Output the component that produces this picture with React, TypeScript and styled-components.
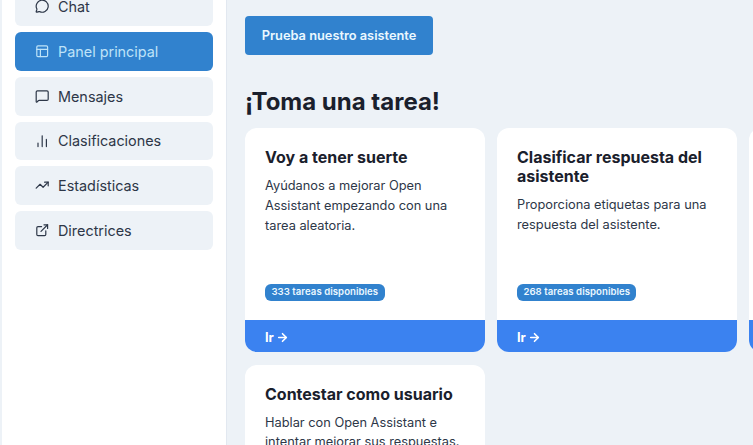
import React from 'react';
import styled, { createGlobalStyle } from 'styled-components';
import { ArrowRight, ChartNoAxesColumn, ExternalLink, MessageCircle, MessageSquare, PanelsTopLeft, TrendingUp } from 'lucide-react';

const GlobalStyle = createGlobalStyle`
  html, body {
    margin: 0;
    height: 100%;
    overflow: hidden;
    background: #edf2f7;
    font-family: Inter, "Liberation Sans", sans-serif;
  }
  * { box-sizing: border-box; }
`;

const Page = styled.div`
  display: flex;
  width: 753px;
  height: 445px;
  overflow: hidden;
  padding-left: 2px;
`;

const Sidebar = styled.nav`
  width: 225px;
  flex-shrink: 0;
  background: #fff;
  border-right: 1px solid #e2e8f0;
  padding: 0 13px;
`;

const NavList = styled.div`
  display: flex;
  flex-direction: column;
  gap: 6px;
  margin-top: -12.7px;
`;

const NavItem = styled.div<{ $active?: boolean }>`
  display: flex;
  align-items: center;
  gap: 8.6px;
  height: 38.75px;
  padding-left: 20px;
  border-radius: 6px;
  font-size: 14.4px;
  background: ${p => (p.$active ? '#3182ce' : '#edf2f7')};
  color: ${p => (p.$active ? '#bee3f8' : '#2d3748')};
  svg {
    width: 14.4px;
    height: 14.4px;
    flex-shrink: 0;
  }
`;

const Main = styled.main`
  flex: 1;
  min-width: 0;
  padding: 16px 0 0 18px;
`;

const AssistantButton = styled.button`
  display: block;
  width: 188px;
  height: 39px;
  padding: 0;
  border: 0;
  border-radius: 4px;
  background: #3182ce;
  color: #ebf8ff;
  font: 600 12.8px Inter, "Liberation Sans", sans-serif;
`;

const Heading = styled.h2`
  margin: 32px 0 12px;
  font-size: 24px;
  line-height: 29px;
  font-weight: 700;
  color: #1a202c;
`;

const CardGrid = styled.div`
  display: grid;
  grid-template-columns: repeat(3, 240px);
  gap: 12.5px 12px;
`;

const Card = styled.article`
  display: flex;
  flex-direction: column;
  height: 224px;
  border-radius: 12px;
  overflow: hidden;
  background: #fff;
`;

const CardBody = styled.div`
  flex: 1;
  display: flex;
  flex-direction: column;
  padding: 20px 20px 19px;
`;

const CardTitle = styled.h3`
  margin: 0 0 8.8px;
  font-size: 16px;
  line-height: 19.2px;
  font-weight: 700;
  color: #1a202c;
`;

const CardText = styled.p`
  margin: 0;
  font-size: 12.8px;
  line-height: 19.9px;
  color: #2d3748;
`;

const Badge = styled.span`
  align-self: flex-start;
  margin-top: auto;
  padding: 0 6.4px;
  height: 17px;
  line-height: 16px;
  border-radius: 6px;
  background: #3182ce;
  color: #ebf8ff;
  font-size: 9.6px;
  font-weight: 600;
  letter-spacing: 0.05px;
`;

const CardFooter = styled.div`
  display: flex;
  align-items: center;
  gap: 2.5px;
  height: 32px;
  padding: 2px 0 0 20px;
  background: #3b82f0;
  color: #fff;
  font-size: 12.8px;
  font-weight: 700;
  svg {
    width: 13px;
    height: 13px;
    stroke-width: 3;
  }
`;

const navItems = [
  { label: 'Chat', icon: <MessageCircle /> },
  { label: 'Panel principal', icon: <PanelsTopLeft />, active: true },
  { label: 'Mensajes', icon: <MessageSquare /> },
  { label: 'Clasificaciones', icon: <ChartNoAxesColumn /> },
  { label: 'Estadísticas', icon: <TrendingUp /> },
  { label: 'Directrices', icon: <ExternalLink /> },
];

const tasks = [
  { title: 'Voy a tener suerte', text: 'Ayúdanos a mejorar Open Assistant empezando con una tarea aleatoria.', count: 333 },
  { title: 'Clasificar respuesta del asistente', text: 'Proporciona etiquetas para una respuesta del asistente.', count: 268 },
  { title: 'Responder como asistente', text: 'Ayuda a Open Assistant a mejorar sus respuestas.', count: 120 },
  { title: 'Contestar como usuario', text: 'Hablar con Open Assistant e intentar mejorar sus respuestas.', count: 95 },
];

const App = () => (
  <>
    <GlobalStyle />
    <Page>
      <Sidebar>
        <NavList>
          {navItems.map(item => (
            <NavItem key={item.label} $active={item.active}>
              {item.icon}
              {item.label}
            </NavItem>
          ))}
        </NavList>
      </Sidebar>
      <Main>
        <AssistantButton>Prueba nuestro asistente</AssistantButton>
        <Heading>¡Toma una tarea!</Heading>
        <CardGrid>
          {tasks.map(task => (
            <Card key={task.title}>
              <CardBody>
                <CardTitle>{task.title}</CardTitle>
                <CardText>{task.text}</CardText>
                <Badge>{task.count} tareas disponibles</Badge>
              </CardBody>
              <CardFooter>
                Ir <ArrowRight />
              </CardFooter>
            </Card>
          ))}
        </CardGrid>
      </Main>
    </Page>
  </>
);

export default App;
